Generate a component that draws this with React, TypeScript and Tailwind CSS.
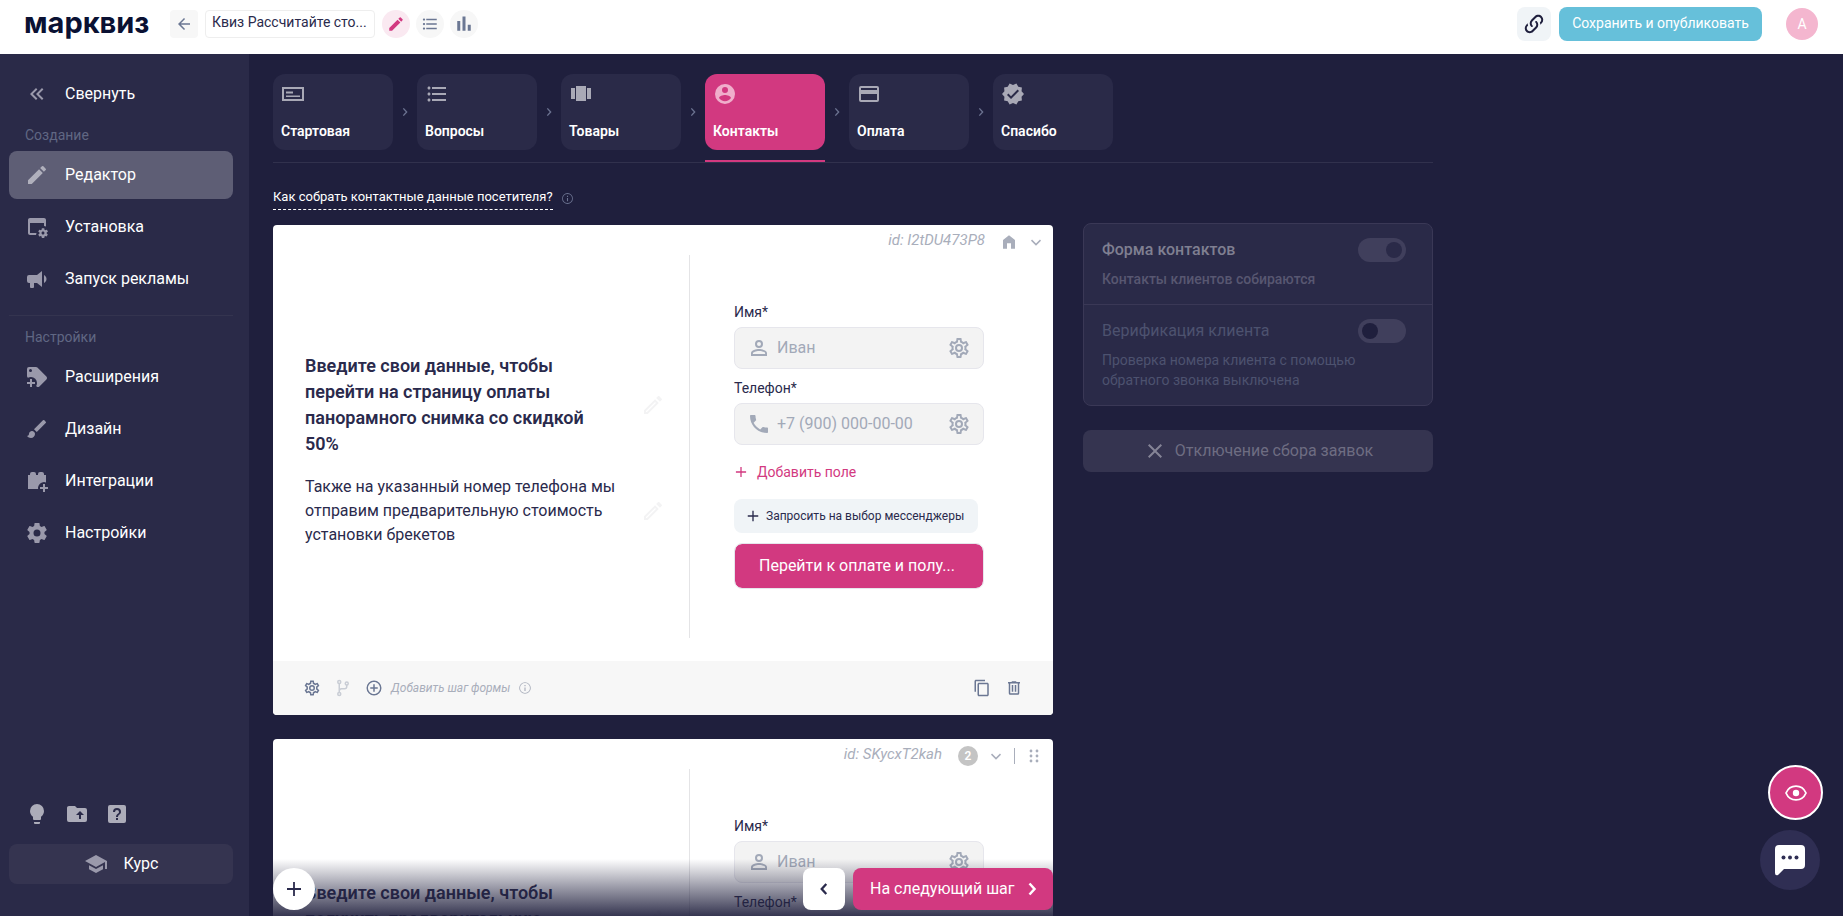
import React from 'react';
import {
  MdArrowBack,
  MdBrush,
  MdClose,
  MdContentCopy,
  MdEdit,
  MdFormatListBulleted,
  MdOutlineEdit,
  MdPhone,
  MdSchool,
} from 'react-icons/md';

const paths = {
  collapse: 'M18.41 7.41 17 6l-6 6 6 6 1.41-1.41L13.83 12zM12.41 7.41 11 6l-6 6 6 6 1.41-1.41L7.83 12z',
  install:
    'M21.7 18.6V17.6L22.8 16.8C22.9 16.7 23 16.6 22.9 16.5L21.9 14.8C21.9 14.7 21.7 14.7 21.6 14.7L20.4 15.2C20.1 15 19.8 14.8 19.5 14.7L19.3 13.4C19.3 13.3 19.2 13.2 19.1 13.2H17.1C16.9 13.2 16.8 13.3 16.8 13.4L16.6 14.7C16.3 14.9 16.1 15 15.8 15.2L14.6 14.7C14.5 14.7 14.4 14.7 14.3 14.8L13.3 16.5C13.3 16.6 13.3 16.7 13.4 16.8L14.5 17.6V18.6L13.4 19.4C13.3 19.5 13.2 19.6 13.3 19.7L14.3 21.4C14.4 21.5 14.5 21.5 14.6 21.5L15.8 21C16 21.2 16.3 21.4 16.6 21.5L16.8 22.8C16.9 22.9 17 23 17.1 23H19.1C19.2 23 19.3 22.9 19.3 22.8L19.5 21.5C19.8 21.3 20 21.2 20.3 21L21.5 21.4C21.6 21.4 21.7 21.4 21.8 21.3L22.8 19.6C22.9 19.5 22.9 19.4 22.8 19.4L21.7 18.6M18 19.5C17.2 19.5 16.5 18.8 16.5 18S17.2 16.5 18 16.5 19.5 17.2 19.5 18 18.8 19.5 18 19.5M11 20H5C3.9 20 3 19.1 3 18V5C3 3.9 3.9 3 5 3H19C20.1 3 21 3.9 21 5V11.5L19 11V8H5V18H11.5Z',
  bullhorn:
    'M12,8H4A2,2 0 0,0 2,10V14A2,2 0 0,0 4,16H5V20A1,1 0 0,0 6,21H8A1,1 0 0,0 9,20V16H12L17,20V4L12,8M21.5,12C21.5,13.71 20.54,15.26 19,16V8C20.53,8.75 21.5,10.3 21.5,12Z',
  tagPlus:
    'M21.41 11.58L12.41 2.58A2 2 0 0 0 11 2H4A2 2 0 0 0 2 4V11A2 2 0 0 0 2.59 12.42L3 12.82A5.62 5.62 0 0 1 6 12A6 6 0 0 1 12 18A5.6 5.6 0 0 1 11.18 21L11.58 21.4A2 2 0 0 0 13 22A2 2 0 0 0 14.41 21.41L21.41 14.41A2 2 0 0 0 22 13A2 2 0 0 0 21.41 11.58M5.5 7A1.5 1.5 0 1 1 7 5.5A1.5 1.5 0 0 1 5.5 7M10 19H7V22H5V19H2V17H5V14H7V17H10Z',
  brickPlus:
    'M20 6H19V5A2 2 0 0 0 17 3H15A2 2 0 0 0 13 5V6H11V5A2 2 0 0 0 9 3H7A2 2 0 0 0 5 5V6H3V20H13.1A6 6 0 0 1 21 13.4V6H20M20 18V15H18V18H15V20H18V23H20V20H23V18H20Z',
  cog: 'M12,15.5A3.5,3.5 0 0,1 8.5,12A3.5,3.5 0 0,1 12,8.5A3.5,3.5 0 0,1 15.5,12A3.5,3.5 0 0,1 12,15.5M19.43,12.97C19.47,12.65 19.5,12.33 19.5,12C19.5,11.67 19.47,11.34 19.43,11L21.54,9.37C21.73,9.22 21.78,8.95 21.66,8.73L19.66,5.27C19.54,5.05 19.27,4.96 19.05,5.05L16.56,6.05C16.04,5.66 15.5,5.32 14.87,5.07L14.5,2.42C14.46,2.18 14.25,2 14,2H10C9.75,2 9.54,2.18 9.5,2.42L9.13,5.07C8.5,5.32 7.96,5.66 7.44,6.05L4.95,5.05C4.73,4.96 4.46,5.05 4.34,5.27L2.34,8.73C2.21,8.95 2.27,9.22 2.46,9.37L4.57,11C4.53,11.34 4.5,11.67 4.5,12C4.5,12.33 4.53,12.65 4.57,12.97L2.46,14.63C2.27,14.78 2.21,15.05 2.34,15.27L4.34,18.73C4.46,18.95 4.73,19.03 4.95,18.95L7.44,17.94C7.96,18.34 8.5,18.68 9.13,18.93L9.5,21.58C9.54,21.82 9.75,22 10,22H14C14.25,22 14.46,21.82 14.5,21.58L14.87,18.93C15.5,18.67 16.04,18.34 16.56,17.94L19.05,18.95C19.27,19.03 19.54,18.95 19.66,18.73L21.66,15.27C21.78,15.05 21.73,14.78 21.54,14.63L19.43,12.97Z',
  cogOutline:
    'M12,8A4,4 0 0,1 16,12A4,4 0 0,1 12,16A4,4 0 0,1 8,12A4,4 0 0,1 12,8M12,10A2,2 0 0,0 10,12A2,2 0 0,0 12,14A2,2 0 0,0 14,12A2,2 0 0,0 12,10M10,22C9.75,22 9.54,21.82 9.5,21.58L9.13,18.93C8.5,18.68 7.96,18.34 7.44,17.94L4.95,18.95C4.73,19.03 4.46,18.95 4.34,18.73L2.34,15.27C2.21,15.05 2.27,14.78 2.46,14.63L4.57,12.97L4.5,12L4.57,11L2.46,9.37C2.27,9.22 2.21,8.95 2.34,8.73L4.34,5.27C4.46,5.05 4.73,4.96 4.95,5.05L7.44,6.05C7.96,5.66 8.5,5.32 9.13,5.07L9.5,2.42C9.54,2.18 9.75,2 10,2H14C14.25,2 14.46,2.18 14.5,2.42L14.87,5.07C15.5,5.32 16.04,5.66 16.56,6.05L19.05,5.05C19.27,4.96 19.54,5.05 19.66,5.27L21.66,8.73C21.79,8.95 21.73,9.22 21.54,9.37L19.43,11L19.5,12L19.43,13L21.54,14.63C21.73,14.78 21.79,15.05 21.66,15.27L19.66,18.73C19.54,18.95 19.27,19.04 19.05,18.95L16.56,17.95C16.04,18.34 15.5,18.68 14.87,18.93L14.5,21.58C14.46,21.82 14.25,22 14,22H10M11.25,4L10.88,6.61C9.68,6.86 8.62,7.5 7.85,8.39L5.44,7.35L4.69,8.65L6.8,10.2C6.4,11.37 6.4,12.64 6.8,13.8L4.68,15.36L5.43,16.66L7.86,15.62C8.63,16.5 9.68,17.14 10.87,17.38L11.24,20H12.76L13.13,17.39C14.32,17.14 15.37,16.5 16.14,15.62L18.57,16.66L19.32,15.36L17.2,13.81C17.6,12.64 17.6,11.37 17.2,10.2L19.31,8.65L18.56,7.35L16.15,8.39C15.38,7.5 14.32,6.86 13.12,6.62L12.75,4H11.25Z',
  bulb: 'M12,2A7,7 0 0,0 5,9C5,11.38 6.19,13.47 8,14.74V17A1,1 0 0,0 9,18H15A1,1 0 0,0 16,17V14.74C17.81,13.47 19,11.38 19,9A7,7 0 0,0 12,2M9,21A1,1 0 0,0 10,22H14A1,1 0 0,0 15,21V20H9V21Z',
  folderUp:
    'M20,6A2,2 0 0,1 22,8V18A2,2 0 0,1 20,20H4A2,2 0 0,1 2,18V6C2,4.89 2.89,4 4,4H10L12,6H20M14,17H16V13H19L15,9L11,13H14V17Z',
  help: 'M11,18H13V16H11V18M12,6A4,4 0 0,0 8,10H10A2,2 0 0,1 12,8A2,2 0 0,1 14,10C14,12 11,11.75 11,15H13C13,12.75 16,12.5 16,10A4,4 0 0,0 12,6M5,3H19A2,2 0 0,1 21,5V19A2,2 0 0,1 19,21H5A2,2 0 0,1 3,19V5A2,2 0 0,1 5,3Z',
  start: 'M1 5H23V19H1V5M3 7V17H21V7H3M5 9.5H12V11.5H5V9.5M5 13.5H19V15H5V13.5Z',
  carousel: 'M7 19h10V4H7v15zM2 17h4V6H2v11zM18 6v11h4V6h-4z',
  account:
    'M12,19.2C9.5,19.2 7.29,17.92 6,16C6.03,14 10,12.9 12,12.9C14,12.9 17.97,14 18,16C16.71,17.92 14.5,19.2 12,19.2M12,5A3,3 0 0,1 15,8A3,3 0 0,1 12,11A3,3 0 0,1 9,8A3,3 0 0,1 12,5M12,2A10,10 0 0,0 2,12A10,10 0 0,0 12,22A10,10 0 0,0 22,12C22,6.47 17.5,2 12,2Z',
  card: 'M20 4H4a2 2 0 0 0-2 2v12a2 2 0 0 0 2 2h16a2 2 0 0 0 2-2V6a2 2 0 0 0-2-2zm0 14H4v-6h16v6zm0-10H4V6h16v2z',
  decagram:
    'M23,12L20.56,9.22L20.9,5.54L17.29,4.72L15.4,1.54L12,3L8.6,1.54L6.71,4.72L3.1,5.53L3.44,9.21L1,12L3.44,14.78L3.1,18.47L6.71,19.29L8.6,22.47L12,21L15.4,22.46L17.29,19.28L20.9,18.46L20.56,14.78L23,12M10,17L6,13L7.41,11.59L10,14.17L16.59,7.58L18,9L10,17Z',
  link: 'M10.59,13.41C11,13.8 11,14.44 10.59,14.83C10.2,15.22 9.56,15.22 9.17,14.83C7.22,12.88 7.22,9.71 9.17,7.76V7.76L12.71,4.22C14.66,2.27 17.83,2.27 19.78,4.22C21.73,6.17 21.73,9.34 19.78,11.29L18.29,12.78C18.3,11.96 18.17,11.14 17.89,10.36L18.36,9.88C19.54,8.71 19.54,6.81 18.36,5.64C17.19,4.46 15.29,4.46 14.12,5.64L10.59,9.17C9.41,10.34 9.41,12.24 10.59,13.41M13.41,9.17C13.8,8.78 14.44,8.78 14.83,9.17C16.78,11.12 16.78,14.29 14.83,16.24V16.24L11.29,19.78C9.34,21.73 6.17,21.73 4.22,19.78C2.27,17.83 2.27,14.66 4.22,12.71L5.71,11.22C5.7,12.04 5.83,12.86 6.11,13.65L5.64,14.12C4.46,15.29 4.46,17.19 5.64,18.36C6.81,19.54 8.71,19.54 9.88,18.36L13.41,14.83C14.59,13.66 14.59,11.76 13.41,10.59C13,10.2 13,9.56 13.41,9.17Z',
  chart: 'M3 8H7V21H3V8M10 2H14V21H10V2M17 13H21V21H17V13Z',
  home: 'M12 2 3 9V22H9V14H15V22H21V9Z',
  person:
    'M12,4A4,4 0 0,1 16,8A4,4 0 0,1 12,12A4,4 0 0,1 8,8A4,4 0 0,1 12,4M12,6A2,2 0 0,0 10,8A2,2 0 0,0 12,10A2,2 0 0,0 14,8A2,2 0 0,0 12,6M12,13C14.67,13 20,14.33 20,17V20H4V17C4,14.33 9.33,13 12,13M12,14.9C9.03,14.9 5.9,16.36 5.9,17V18.1H18.1V17C18.1,16.36 14.97,14.9 12,14.9Z',
  plus: 'M19 12.9H12.9V19H11.1V12.9H5V11.1H11.1V5H12.9V11.1H19Z',
  plusCircle:
    'M12,20C7.59,20 4,16.41 4,12C4,7.59 7.59,4 12,4C16.41,4 20,7.59 20,12C20,16.41 16.41,20 12,20M12,2A10,10 0 0,0 2,12A10,10 0 0,0 12,22A10,10 0 0,0 22,12A10,10 0 0,0 12,2M13,7H11V11H7V13H11V17H13V13H17V11H13V7Z',
  info: 'M11,9H13V7H11M12,20.5A8.5,8.5 0 1,1 12,3.5A8.5,8.5 0 0,1 12,20.5M12,2A10,10 0 0,0 2,12A10,10 0 0,0 12,22A10,10 0 0,0 22,12A10,10 0 0,0 12,2M11,17H13V11H11V17Z',
  trash:
    'M9,3V4H4V6H5V19A2,2 0 0,0 7,21H17A2,2 0 0,0 19,19V6H20V4H15V3H9M7,6H17V19H7V6M9,8V17H11V8H9M13,8V17H15V8H13Z',
};

type IconProps = { name: keyof typeof paths; className?: string };

const Icon = ({ name, className = 'size-6' }: IconProps) => (
  <svg viewBox="0 0 24 24" fill="currentColor" fillRule="evenodd" className={`shrink-0 ${className}`} aria-hidden="true">
    <path d={paths[name]} />
  </svg>
);

const arrows = {
  left: 'M14.5 6.5 9.500 12 14.500 17.500',
  right: 'M9.500 6.500 14.500 12 9.500 17.500',
  down: 'M6 9.500 12 15.500 18 9.500',
};

type ChevronProps = { to: keyof typeof arrows; className?: string; width?: number };

const Chevron = ({ to, className = 'size-6', width = 2.5 }: ChevronProps) => (
  <svg viewBox="0 0 24 24" fill="none" stroke="currentColor" strokeWidth={width} className={`shrink-0 ${className}`} aria-hidden="true">
    <path d={arrows[to]} />
  </svg>
);

const BranchIcon = () => (
  <svg viewBox="0 0 24 24" fill="none" stroke="currentColor" strokeWidth="2" className="size-[18px]" aria-hidden="true">
    <circle cx="7" cy="4" r="2" />
    <circle cx="7" cy="20" r="2" />
    <circle cx="17" cy="6" r="2" />
    <path d="M7 6V18M17 8V10C17 12 16 13 14 13H10C8 13 7 14 7 16" />
  </svg>
);

const DragIcon = () => (
  <svg viewBox="0 0 10 14" fill="currentColor" className="h-[14px] w-[10px]" aria-hidden="true">
    {[2, 7, 12].map((y) => (
      <React.Fragment key={y}>
        <circle cx="2" cy={y} r="1.4" />
        <circle cx="8" cy={y} r="1.4" />
      </React.Fragment>
    ))}
  </svg>
);

const Header = () => (
  <header className="flex h-[54px] shrink-0 items-start justify-between bg-white pl-6 pr-[25px] pt-[7px]">
    <div className="flex h-[34px] items-center">
      <a href="#" className="w-[146px] pb-[2px] font-['Inter',sans-serif] text-[29px] font-bold leading-8 text-[#0a1133]">
        марквиз
      </a>
      <button aria-label="Назад" className="flex size-7 items-center justify-center rounded bg-[#f7f7f7] text-[#6b7793]">
        <MdArrowBack className="size-[18px]" />
      </button>
      <input
        aria-label="Название квиза"
        defaultValue="Квиз Рассчитайте сто..."
        className="ml-[7px] h-7 w-[170px] rounded border border-[#eeeeee] px-[6px] pb-1 text-sm text-[#2a2a4c]"
      />
      <div className="ml-[7px] flex gap-[6px]">
        <button aria-label="Редактировать" className="flex size-7 items-center justify-center rounded-full bg-[#fae9f1] text-[#d23980]">
          <MdEdit className="size-[18px]" />
        </button>
        <button aria-label="Список" className="flex size-7 items-center justify-center rounded-full bg-[#f7f7f7] text-[#6b7793]">
          <MdFormatListBulleted className="size-[18px]" />
        </button>
        <button aria-label="Статистика" className="flex size-7 items-center justify-center rounded-full bg-[#f7f7f7] text-[#6b7793]">
          <Icon name="chart" className="size-[18px]" />
        </button>
      </div>
    </div>
    <div className="flex items-center">
      <button aria-label="Ссылка" className="flex size-[34px] items-center justify-center rounded-lg bg-[#f0f4f7] text-[#1f1f3d]">
        <Icon name="link" />
      </button>
      <button className="ml-2 h-[34px] w-[203px] whitespace-nowrap rounded-lg bg-[#66c0da] pb-[2px] text-sm text-white">
        Сохранить и опубликовать
      </button>
      <button className="ml-6 size-8 rounded-full bg-[#f4b6cf] text-sm text-white">А</button>
    </div>
  </header>
);

type NavItemProps = { icon: React.ReactNode; label: string; active?: boolean };

const NavItem = ({ icon, label, active }: NavItemProps) => (
  <a
    href="#"
    className={`flex h-12 items-center gap-4 rounded-lg px-4 text-base text-white ${active ? 'bg-[#5e5e75]' : ''}`}
  >
    <span className={active ? 'text-[#b0b0bc]' : 'text-[#9a99ab]'}>{icon}</span>
    {label}
  </a>
);

const Sidebar = () => (
  <aside className="flex w-[249px] shrink-0 flex-col bg-[#2a2a48] pb-8 pl-[9px] pr-4 pt-4">
    <NavItem icon={<Icon name="collapse" />} label="Свернуть" />
    <p className="mt-[7px] px-4 pb-[6px] text-sm text-[#606783]">Создание</p>
    <nav className="flex flex-col gap-1">
      <NavItem icon={<MdEdit className="size-6" />} label="Редактор" active />
      <NavItem icon={<Icon name="install" />} label="Установка" />
      <NavItem icon={<Icon name="bullhorn" />} label="Запуск рекламы" />
    </nav>
    <hr className="mt-3 border-[#34344f]" />
    <p className="mt-[11px] px-4 pb-[6px] text-sm text-[#606783]">Настройки</p>
    <nav className="flex flex-col gap-1">
      <NavItem icon={<Icon name="tagPlus" />} label="Расширения" />
      <NavItem icon={<MdBrush className="size-6" />} label="Дизайн" />
      <NavItem icon={<Icon name="brickPlus" />} label="Интеграции" />
      <NavItem icon={<Icon name="cog" />} label="Настройки" />
    </nav>
    <div className="mt-auto flex gap-4 px-4 text-[#acacb9]">
      <button aria-label="Идеи"><Icon name="bulb" /></button>
      <button aria-label="Загрузки"><Icon name="folderUp" /></button>
      <button aria-label="Помощь"><Icon name="help" /></button>
    </div>
    <button className="mt-[18px] flex h-10 items-center justify-center gap-4 rounded-lg bg-[#353450] text-base text-white">
      <MdSchool className="size-6 text-[#9a99ab]" />
      Курс
    </button>
  </aside>
);

const steps: { label: string; icon: React.ReactNode; active?: boolean }[] = [
  { label: 'Стартовая', icon: <Icon name="start" /> },
  { label: 'Вопросы', icon: <MdFormatListBulleted className="size-6" /> },
  { label: 'Товары', icon: <Icon name="carousel" /> },
  { label: 'Контакты', icon: <Icon name="account" />, active: true },
  { label: 'Оплата', icon: <Icon name="card" /> },
  { label: 'Спасибо', icon: <Icon name="decagram" /> },
];

const Steps = () => (
  <nav className="flex border-b border-[#31314d]">
    {steps.map((step, i) => (
      <React.Fragment key={step.label}>
        {i > 0 && (
          <span className="flex h-[76px] w-6 items-center justify-center text-[#6c7391]">
            <Chevron to="right" className="size-4" width={2} />
          </span>
        )}
        <div className={`border-b-2 pb-[10px] ${step.active ? 'border-[#d23980]' : 'border-transparent'}`}>
          <a
            href="#"
            className={`flex h-[76px] w-[120px] flex-col justify-between rounded-xl px-2 pb-[9px] pt-2 text-sm font-semibold text-white ${
              step.active ? 'bg-[#d23980]' : 'bg-[#2a2a48]'
            }`}
          >
            <span className={step.active ? 'text-[#f0aecb]' : 'text-[#a9a9b6]'}>{step.icon}</span>
            {step.label}
          </a>
        </div>
      </React.Fragment>
    ))}
  </nav>
);

type FieldProps = { id: string; label: string; placeholder: string; icon: React.ReactNode };

const Field = ({ id, label, placeholder, icon }: FieldProps) => (
  <div>
    <label htmlFor={id} className="mb-[5px] block text-sm text-[#2a2a4c]">{label}</label>
    <div className="flex h-[42px] items-center rounded-lg border border-[#e6e6ec] bg-[#f3f3f3] px-3 text-[#a2a9b8]">
      {icon}
      <input
        id={id}
        placeholder={placeholder}
        className="ml-[6px] w-full min-w-0 bg-transparent text-base outline-none placeholder:text-[#a2a9b8]"
      />
      <button type="button" aria-label="Настроить поле">
        <Icon name="cogOutline" />
      </button>
    </div>
  </div>
);

type ContactCardProps = { id: string; title: string; text: string; controls: React.ReactNode };

const ContactCard = ({ id, title, text, controls }: ContactCardProps) => (
  <article className="overflow-hidden rounded bg-white">
    <div className="flex h-[30px] items-center justify-end text-[#a9aebb]">
      <span className="text-[15px] italic">id: {id}</span>
      {controls}
    </div>
    <div className="mb-[23px] flex min-h-[383px]">
      <div className="flex w-[417px] flex-col justify-center gap-[18px] border-r border-[#e4e4e6] pl-8 pr-6 pt-[6px] text-[#2a2a4c]">
        <div className="flex items-center">
          <h2 className="w-[325px] pr-4 text-lg font-semibold leading-[26px]">{title}</h2>
          <button aria-label="Изменить заголовок" className="ml-auto text-[#f3f3f4]"><MdOutlineEdit className="size-6" /></button>
        </div>
        <div className="flex items-center">
          <p className="w-[325px] text-base">{text}</p>
          <button aria-label="Изменить описание" className="ml-auto text-[#f3f3f4]"><MdOutlineEdit className="size-6" /></button>
        </div>
      </div>
      <form className="ml-11 flex w-[250px] flex-col items-start justify-center pb-[2px]">
        <div className="flex w-full flex-col gap-[9px]">
          <Field id={`name-${id}`} label="Имя*" placeholder="Иван" icon={<Icon name="person" />} />
          <Field id={`phone-${id}`} label="Телефон*" placeholder="+7 (900) 000-00-00" icon={<MdPhone className="size-6 shrink-0" />} />
        </div>
        <button type="button" className="mt-4 flex h-[22px] items-center gap-[9px] text-sm text-[#d23980]">
          <Icon name="plus" className="size-[14px] scale-125" />
          Добавить поле
        </button>
        <button type="button" className="mt-4 flex h-[34px] items-center gap-1 whitespace-nowrap rounded-lg bg-[#f0f4f7] pl-[10px] pr-[14px] text-xs text-[#2a2a4c]">
          <Icon name="plus" className="size-[18px]" />
          Запросить на выбор мессенджеры
        </button>
        <button type="button" className="mt-[10px] h-[46px] w-full whitespace-nowrap rounded-lg border border-[#e6e6ec] bg-[#d23980] bg-clip-padding px-6 text-left text-base text-white">
          Перейти к оплате и полу...
        </button>
      </form>
    </div>
    <footer className="flex h-[54px] items-center bg-[#f7f7f7] px-[30px] text-[#6b7793]">
      <button aria-label="Настройки шага"><Icon name="cogOutline" className="size-[18px]" /></button>
      <button aria-label="Ветвление" className="ml-[13px] text-[#c9cdd5]"><BranchIcon /></button>
      <button className="ml-[13px] flex items-center gap-2 text-xs italic text-[#a9aebb]">
        <Icon name="plusCircle" className="size-[18px] text-[#6b7793]" />
        Добавить шаг формы
      </button>
      <Icon name="info" className="ml-2 size-[14px] text-[#a9aebb]" />
      <button aria-label="Копировать" className="ml-auto"><MdContentCopy className="size-[18px]" /></button>
      <button aria-label="Удалить" className="ml-[14px]"><Icon name="trash" className="size-[18px]" /></button>
    </footer>
  </article>
);

type SwitchRowProps = { id: string; title: string; checked?: boolean; titleClass: string; textClass: string; text: string };

const SwitchRow = ({ id, title, checked, titleClass, textClass, text }: SwitchRowProps) => (
  <div className="px-[18px] pb-[15px] pt-[14px]">
    <div className="flex items-center justify-between pr-2">
      <label htmlFor={id} className={`text-base ${titleClass}`}>{title}</label>
      <input
        id={id}
        type="checkbox"
        role="switch"
        defaultChecked={checked}
        className="h-6 w-12 appearance-none rounded-full bg-[#403f5c] p-1 before:block before:size-4 before:rounded-full before:bg-[#1f1f3d] checked:before:ml-6 checked:before:bg-[#2a2a48]"
      />
    </div>
    <p className={`mt-[7px] text-sm ${textClass}`}>{text}</p>
  </div>
);

const SidePanel = () => (
  <section className="-mt-[2px] w-[350px] shrink-0">
    <div className="divide-y divide-[#3a3856] rounded-lg border border-[#3a3856] bg-[#2a2a48]">
      <SwitchRow
        id="contacts-form"
        title="Форма контактов"
        checked
        titleClass="font-medium text-[#7f7f91]"
        textClass="font-medium text-[#585771]"
        text="Контакты клиентов собираются"
      />
      <SwitchRow
        id="client-verification"
        title="Верификация клиента"
        titleClass="text-[#4d526f]"
        textClass="text-[#4d526f]"
        text="Проверка номера клиента с помощью обратного звонка выключена"
      />
    </div>
    <button className="mt-6 flex h-[42px] w-full items-center justify-center gap-2 rounded-lg bg-[#353450] text-base text-[#6e6d82]">
      <MdClose className="size-6 text-[#858496]" />
      Отключение сбора заявок
    </button>
  </section>
);

const BottomBar = () => (
  <div className="absolute inset-x-6 bottom-0 flex h-[57px] max-w-[780px] items-start bg-linear-to-b from-transparent to-[#1f1f3d]/90 pt-[9px]">
    <button aria-label="Добавить" className="flex size-[42px] items-center justify-center rounded-full bg-white text-[#2a2a4c]">
      <Icon name="plus" />
    </button>
    <button aria-label="Предыдущий шаг" className="ml-auto flex size-[42px] items-center justify-center rounded-lg bg-white text-[#2a2a4c]">
      <Chevron to="left" className="size-[22px]" />
    </button>
    <button className="ml-2 flex h-[42px] w-[200px] items-center justify-between whitespace-nowrap rounded-lg bg-[#d23980] pl-[17px] pr-[9px] text-base text-white">
      На следующий шаг
      <Chevron to="right" />
    </button>
  </div>
);

const FloatingButtons = () => (
  <div className="fixed bottom-[26px] right-5 flex flex-col items-end gap-[10px]">
    <button aria-label="Предпросмотр" className="flex size-[55px] items-center justify-center rounded-full border-2 border-white bg-[#d23980] text-white">
      <svg viewBox="0 0 24 24" className="size-6" fill="none" stroke="currentColor" strokeWidth="1.8" aria-hidden="true">
        <path d="M2 12C6 2.800 18 2.800 22 12C18 21.200 6 21.200 2 12Z" />
        <circle cx="12" cy="12" r="3.2" fill="currentColor" stroke="none" />
      </svg>
    </button>
    <button aria-label="Чат" className="mr-[3px] flex size-[60px] items-center justify-center rounded-full bg-[#2f2e53] text-white">
      <svg viewBox="0 0 30 31" className="h-[31px] w-[30px]" aria-hidden="true">
        <path d="M4 0H26Q30 0 30 4V20Q30 24 26 24H9L3 30Q0 31 0 28V4Q0 0 4 0Z" fill="currentColor" />
        <g fill="#2f2e53">
          <circle cx="8.500" cy="12.500" r="2" />
          <circle cx="15" cy="12.500" r="2" />
          <circle cx="21.500" cy="12.500" r="2" />
        </g>
      </svg>
    </button>
  </div>
);

export default function App() {
  return (
    <div className="flex h-screen flex-col overflow-hidden bg-[#1f1f3d] font-['Roboto',sans-serif]">
      <Header />
      <div className="flex min-h-0 flex-1">
        <Sidebar />
        <main className="relative min-w-0 flex-1 overflow-hidden px-6 pt-5">
          <div className="max-w-[1160px]">
            <Steps />
            <div className="mt-6 flex h-[23px] items-center gap-2">
              <a href="#" className="border-b border-dashed border-white pb-[2px] text-[13px] text-white">
                Как собрать контактные данные посетителя?
              </a>
              <Icon name="info" className="size-[13px] text-[#6c7391]" />
            </div>
            <div className="mt-[15px] flex items-start gap-[30px]">
              <div className="flex max-w-[780px] flex-1 flex-col gap-6">
                <ContactCard
                  id="I2tDU473P8"
                  title="Введите свои данные, чтобы перейти на страницу оплаты панорамного снимка со скидкой 50%"
                  text="Также на указанный номер телефона мы отправим предварительную стоимость установки брекетов"
                  controls={
                    <>
                      <Icon name="home" className="ml-4 mt-1 size-4" />
                      <button aria-label="Развернуть" className="ml-[10px] mr-2 mt-1">
                        <Chevron to="down" className="size-[18px]" width={2} />
                      </button>
                    </>
                  }
                />
                <ContactCard
                  id="SKycxT2kah"
                  title="Введите свои данные, чтобы получить предварительную стоимость"
                  text="Также на указанный номер телефона мы отправим предварительную стоимость установки брекетов"
                  controls={
                    <>
                      <span className="ml-4 mt-1 flex size-5 items-center justify-center rounded-full bg-[#c4c4c4] text-xs font-semibold text-white">2</span>
                      <button aria-label="Развернуть" className="ml-[9px] mt-1">
                        <Chevron to="down" className="size-[18px]" width={2} />
                      </button>
                      <span className="ml-[9px] mt-1 h-4 w-px bg-[#a9aebb]" />
                      <button aria-label="Переместить" className="ml-[14px] mr-[14px] mt-1"><DragIcon /></button>
                    </>
                  }
                />
              </div>
              <SidePanel />
            </div>
          </div>
          <BottomBar />
        </main>
      </div>
      <FloatingButtons />
    </div>
  );
}
